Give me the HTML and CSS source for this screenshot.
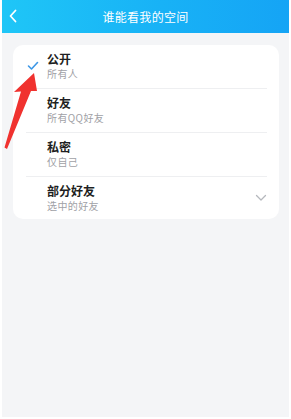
FILE: index.html
```html
<!DOCTYPE html>
<html lang="zh">
<head>
<meta charset="utf-8">
<link rel="stylesheet" href="styles.css">
</head>
<body>
<div class="screen">
  <header class="topbar">
    <svg class="back" width="10" height="14" viewBox="0 0 10 14"><path d="M7.5 1.5 L2.5 7 L7.5 12.5" fill="none" stroke="#fff" stroke-width="1.8" stroke-linecap="round" stroke-linejoin="round"/></svg>
    <div class="title">谁能看我的空间</div>
  </header>
  <div class="card">
    <div class="row">
      <svg class="check" width="12" height="10" viewBox="0 0 12 10"><path d="M1.5 5 L4.5 8 L10.5 1.5" fill="none" stroke="#3d97e6" stroke-width="1.6" stroke-linecap="round" stroke-linejoin="round"/></svg>
      <div class="texts"><div class="name">公开</div><div class="desc">所有人</div></div>
    </div>
    <div class="row">
      <div class="texts"><div class="name">好友</div><div class="desc">所有QQ好友</div></div>
    </div>
    <div class="row">
      <div class="texts"><div class="name">私密</div><div class="desc">仅自己</div></div>
    </div>
    <div class="row last">
      <div class="texts"><div class="name">部分好友</div><div class="desc">选中的好友</div></div>
      <svg class="chev" width="12" height="8" viewBox="0 0 12 8"><path d="M1.5 1.5 L6 6 L10.5 1.5" fill="none" stroke="#b5b8bd" stroke-width="1.3" stroke-linecap="round" stroke-linejoin="round"/></svg>
    </div>
  </div>
  <svg class="arrow" width="40" height="80" viewBox="0 0 40 80"><polygon points="30,0 33,18 27,18 3,76 0.5,74.5 17,18.5 10,19" fill="#f0322f"/></svg>
</div>
</body>
</html>
```
FILE: styles.css
```css
html, body { margin: 0; padding: 0; background: #ffffff; }
body { width: 291px; height: 419px; overflow: hidden; font-family: "Noto Sans CJK SC", "Noto Sans", sans-serif; }
.screen {
  position: relative;
  margin: 0 2px;
  height: 417px;
  background: #f4f5f7;
  display: flex;
  flex-direction: column;
}
.topbar {
  height: 33px;
  flex: none;
  background: linear-gradient(90deg, #1fc6f7 0%, #18b2f6 55%, #15a4f5 100%);
  display: flex;
  align-items: center;
  justify-content: center;
  position: relative;
}
.back { position: absolute; left: 6px; top: 9px; }
.title { color: #fff; font-size: 12px; line-height: 16px; letter-spacing: 0.3px; }
.card {
  margin: 12px 10px 0 11px;
  background: #fff;
  border-radius: 10px;
  display: flex;
  flex-direction: column;
}
.row {
  position: relative;
  height: 43px;
  margin: 0 12px 0 13px;
  border-bottom: 1px solid #eeeff1;
  display: flex;
  align-items: flex-start;
}
.row.last { border-bottom: none; height: 42px; }
.texts { padding: 5px 0 0 21px; }
.name { font-size: 12px; line-height: 17px; font-weight: 700; color: #1e1f22; }
.desc { font-size: 10px; line-height: 14px; color: #9fa1a6; letter-spacing: 0.4px; }
.check { position: absolute; left: 1px; top: 16px; }
.chev { position: absolute; right: 0; top: 17px; }
.arrow { position: absolute; left: 2px; top: 73px; }
```
